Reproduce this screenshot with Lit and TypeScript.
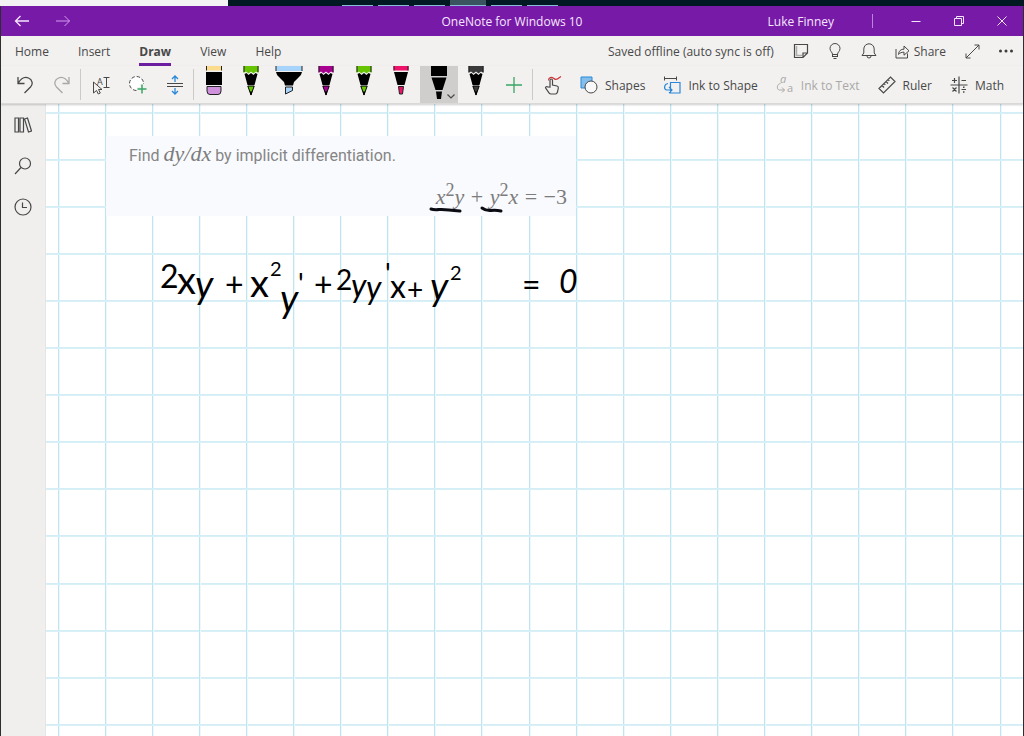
import { LitElement, html, svg, css } from "lit";
import { customElement, state } from "lit/decorators.js";

const icon = (w: number, h: number, body: unknown) =>
  html`<svg class="icon" width=${w} height=${h} viewBox="0 0 ${w} ${h}" aria-hidden="true">${body}</svg>`;

const icons = {
  back: icon(16, 12, svg`<path d="M15 6H1.500M6.500 1L1.500 6l5 5" stroke-width="1.300"/>`),
  forward: icon(16, 12, svg`<path d="M1 6h13.500M9.500 1l5 5-5 5"/>`),
  minimize: icon(10, 10, svg`<path d="M.5 5.500h9"/>`),
  restore: icon(10, 10, svg`<path d="M.5 2.500h7v7h-7zM2.500 2.500v-2h7v7h-2"/>`),
  close: icon(10, 10, svg`<path d="M.5.5l9 9M9.500.5l-9 9"/>`),
  note: icon(16, 16, svg`<path d="M1.500 1.500h13v8.500l-4.500 4.500H1.500zM14.500 10H10v4.500" stroke-width="1.200"/><path d="M3.500 3v9.500H9" opacity=".4" stroke-width="1.500"/>`),
  bulb: icon(14, 18, svg`<path d="M4.500 12.500c0-2.500-2.500-3-2.500-6a5 5 0 0 1 10 0c0 3-2.500 3.500-2.500 6zM4.500 14.500h5M5.500 16.500h3M4.500 12v3M9.500 12v3"/>`),
  bell: icon(16, 18, svg`<path d="M1 13.500h14l-1.800-2.500V7a5.200 5.200 0 0 0-10.400 0v4zM6 14a2 2 0 0 0 4 0"/>`),
  share: icon(15, 15, svg`<path d="M1 5v9h11.500V9.500M3.500 10.500c.3-3.800 2.500-5.300 5.500-5.300V2l5 4.800-5 4.400V8.200c-2.500 0-4 .6-5.500 2.300z"/>`),
  expand: icon(15, 15, svg`<path d="M1 14L14 1M9.500 1H14v4.500M1 9.500V14h4.500"/>`),
  more: icon(16, 4, svg`<g fill="#3b3b3b" stroke="none"><circle cx="2.500" cy="2" r="1.500"/><circle cx="8" cy="2" r="1.500"/><circle cx="13.500" cy="2" r="1.500"/></g>`),
  undo: icon(18, 19, svg`<path d="M2 2v6.500h6.500M2.200 8.200C5 3.500 9 1.500 12.500 3c4 1.800 4.800 6 2 9l-6 6" stroke-width="1.300"/>`),
  redo: icon(18, 19, svg`<path d="M16 2v6.500H9.500M15.800 8.200C13 3.500 9 1.500 5.500 3c-4 1.800-4.800 6-2 9l6 6" stroke-width="1.300"/>`),
  selectText: icon(20, 20, svg`<path d="M2.500 7v11l3-2.500 1.800 3.500 2-1-1.800-3.500h3.500z"/><path d="M12.500 2.500h6M12.500 12.500h6M15.500 2.500v10"/><text class="tiny" x="6" y="10">A</text>`),
  lasso: icon(20, 20, svg`<circle cx="8.500" cy="8.500" r="7" stroke-dasharray="3.500 2" fill="#fff"/><path d="M14 9v10M9 14h10" stroke="#f3f2f1" stroke-width="4"/><path d="M14 9.500v9M9.500 14h9" stroke="#3aa564" stroke-width="1.500"/>`),
  space: icon(18, 20, svg`<path d="M1 8.500h16M1 11.500h16"/><path d="M9 7V1.500M6 4l3-3 3 3M9 13v5.500M6 16l3 3 3-3" stroke="#2b88d8" stroke-width="1.300"/>`),
  plus: icon(18, 18, svg`<path d="M9 1v16M1 9h16" stroke="#3aa564" stroke-width="1.300"/>`),
  touch: icon(18, 20, svg`<path d="M6 12V5.500c0-2 2.500-2 2.500 0V10l4.500 1c1.200.3 1.500 1 1.300 2l-.8 4c-.3 1-.8 2-2 2H7c-1 0-1.500-.5-2-1.200l-3.500-5c0-1 1-1.500 2-1z" stroke-width="1.200"/><path d="M4.500 5.500c0-3 3-4 5-2.200s3.500 1.500 6-.8L17 1.500" stroke="#d13438" stroke-width="1.200"/>`),
  shapes: icon(18, 18, svg`<path d="M1 1h11v11H1z" fill="#83beec" stroke="#2b88d8"/><circle cx="11" cy="11" r="6" fill="#f8f8f8"/>`),
  inkShape: icon(18, 18, svg`<path d="M1.500 2.500h12M1.500.5v4M13.500.5v4"/><path d="M7.500 6.500h9.500v10.500H7.500zM5 7.500C1 8 .5 13 3.500 14h5M6 11l3 3-3 3" stroke="#2b88d8" stroke-width="1.200"/>`),
  inkText: icon(18, 28, svg`<text class="glyph slant" x="4" y="12">a</text><text class="glyph" x="11" y="21">a</text><path d="M4.500 12.500C.5 13 .5 19 3.500 19h5M6 16.500L8.500 19 6 21.500"/>`),
  ruler: icon(18, 18, svg`<path d="M1 12.500L12.500 1 17 5.500 5.500 17zM4 9.500l2 2M6 7.500l1.300 1.300M8 5.500l2 2M10 3.500l1.300 1.300" stroke-width="1.200"/>`),
  math: icon(18, 18, svg`<path d="M9 .5v17M.5 9h17M2 4.500h5M4.500 2v5M11.500 4.500H16M2.500 11.500l4 4M6.500 11.500l-4 4M11.500 13.500H16" stroke-width="1.200"/><path d="M13 11.200h1.500M13 16h1.500" stroke-width="1.500"/>`),
  books: icon(18, 16, svg`<path d="M1 1h3.500v14H1zM6 1h3.500v14H6zM10.500 2l3-1 4 13-3 1z" stroke-width="1.200"/>`),
  search: icon(18, 18, svg`<circle cx="11" cy="6.500" r="5.500" stroke-width="1.200"/><path d="M7 10.500L1 17" stroke-width="1.200"/>`),
  clock: icon(18, 18, svg`<circle cx="9" cy="9" r="8" stroke-width="1.200"/><path d="M8.500 4.500V9.500H13" stroke-width="1.200"/>`),
  chevron: icon(8, 5, svg`<path d="M.5.5L4 4 7.500.5" stroke-width="1.200"/>`),
};

const pen = (body: unknown) =>
  html`<svg class="pen-art" width="30" height="34" viewBox="0 0 30 34" aria-hidden="true">${body}</svg>`;

const pencil = (color: string) => pen(svg`
  <path d="M7.500 0h15v7l-2.500-1.500-2.500 2-2.500-2-2.500 2L10 5.500 7.500 7z" fill=${color}/>
  <path d="M8 0v6M22 0v6" stroke="#222" stroke-width="1"/>
  <path d="M8.500 8l2-1 2 2 2.500-2 2.500 2 2-2 2 1L18.500 19h-7z" fill="#000"/>
  <path d="M11.800 20h6.400L15 29z" fill=${color} stroke="#000" stroke-width="1"/>
  <path d="M13.700 25.500h2.600L15 29.500z" fill="#000"/>`);

const eraser = pen(svg`
  <path d="M7.500 0h15v4.500h-15z" fill="#fbdc8c"/><path d="M7.500 0v4.500M22.500 0v4.500" stroke="#222"/>
  <path d="M7 6h16v13H7z" fill="#000"/>
  <path d="M8 20.500h14V25q0 3.500-3 3.500h-8q-3 0-3-3.500z" fill="#cf91dc" stroke="#222"/>`);

const highlighter = pen(svg`
  <path d="M2 0h26v5H2z" fill="#a6d4fb"/><path d="M2 0v5M28 0v5" stroke="#222"/>
  <path d="M2 6h26q-.5 3-3 5l-5 5-1 3.500h-8L10 16l-5-5Q2.500 9 2 6z" fill="#000"/>
  <path d="M11.500 21h7v3.500l-7 3.500z" fill="#a6d4fb" stroke="#222"/>`);

const marker = pen(svg`
  <path d="M7.500 0h15v4.500h-15z" fill="#f0116b"/><path d="M8 0v4.500M22 0v4.500" stroke="#222"/>
  <path d="M8 6h14L18.500 19h-7z" fill="#000"/>
  <path d="M12.500 20.500h5L16.500 28h-3z" fill="#f0116b" stroke="#222"/>`);

const blackPen = pen(svg`
  <path d="M7 0h16v10H7zM7.500 11.500h15L18.500 24h-7zM12 25.500h6L17 33h-4z" fill="#000"/>`);

const tools = [
  { name: "Eraser", art: eraser },
  { name: "Green pencil", art: pencil("#66c400") },
  { name: "Light blue highlighter", art: highlighter },
  { name: "Purple pencil", art: pencil("#a8008f") },
  { name: "Lime pencil", art: pencil("#66c400") },
  { name: "Pink pen", art: marker },
  { name: "Black pen", art: blackPen },
  { name: "Black pencil", art: pencil("#3a3a3a") },
];

const TILE = 471;
const steps = Array.from({ length: 10 }, (_, i) => Math.floor(i * 47.1));

@customElement("app-root")
export class AppRoot extends LitElement {
  @state() private tool = 6;
  @state() private tab = "Draw";

  static styles = css`
    :host {
      display: flex;
      flex-direction: column;
      min-height: 100vh;
      box-sizing: border-box;
      font: 12px/16px "Open Sans", "Noto Sans", sans-serif;
      color: #484848;
      background: #f2f1f0;
    }
    button {
      font: inherit;
      color: inherit;
      background: none;
      border: 0;
      padding: 0;
      margin: 0;
      display: flex;
      align-items: center;
      justify-content: center;
    }
    .icon {
      display: block;
      flex: none;
      fill: none;
      stroke: currentColor;
    }
    .tiny, .glyph {
      fill: currentColor;
      stroke: none;
      font-size: 9px;
    }
    .glyph { font-size: 11px; }
    .slant { font-style: italic; }

    .desktop {
      height: 6px;
      display: flex;
      background: #011922;
    }
    .behind { width: 228px; background: #f3f3f3; }
    .tasks {
      display: flex;
      gap: 5px;
      margin-left: 114px;
    }
    .task {
      width: 31px;
      box-sizing: border-box;
      border-bottom: 1px solid #86bdd9;
    }
    .task.current { width: 36px; background: #3b5560; }

    .window {
      flex: 1;
      display: flex;
      flex-direction: column;
      border: solid #2e2e2e;
      border-width: 0 1px;
    }
    .titlebar {
      height: 30px;
      display: grid;
      grid-template-columns: 1fr auto 1fr;
      align-items: stretch;
      background: #761aa7;
      color: #f6e6fd;
    }
    .history, .system { display: flex; }
    .history button { width: 41px; }
    .forward { color: #d49cee; }
    .title { align-self: center; padding-top: 2px; }
    .system { justify-content: flex-end; align-items: center; }
    .system button { width: 43px; height: 30px; }
    .user { padding: 2px 38px 0 0; }
    .divider {
      width: 1px;
      height: 14px;
      margin-right: 21px;
      background: #bd83dc;
    }

    .tabs {
      height: 30px;
      display: flex;
      justify-content: space-between;
    }
    .tablist { display: flex; gap: 29px; padding-left: 14px; }
    .tab {
      border-bottom: 3px solid transparent;
      padding-top: 4px;
    }
    .tab.active {
      font-weight: 700;
      border-color: #6b1fa0;
    }
    .status { display: flex; align-items: center; }
    .saved { padding: 2px 10px 0 0; }
    .status button { width: 34px; height: 30px; }
    .status .share { width: auto; padding: 0 9px; gap: 4px; }
    .share span, .labelled span { padding-top: 2px; }

    .ribbon {
      height: 37px;
      display: flex;
      align-items: stretch;
      padding-left: 5px;
      border-bottom: 1px solid #dad9d8;
      box-shadow: 0 1px 2px #0003;
      z-index: 1;
    }
    .ribbon > button { width: 37px; }
    .rule {
      width: 1px;
      margin: 3px 1px 3px 0;
      background: #cbcac9;
    }
    .disabled { color: #a9a8a7; }
    .pens {
      width: 300px;
      display: grid;
      grid-template-columns: repeat(8, 1fr);
    }
    .pen {
      position: relative;
      align-items: flex-start;
      overflow: hidden;
    }
    .pen.active { background: #cfcecd; }
    .pen-art { display: block; fill: none; }
    .pen .icon { position: absolute; right: 3px; bottom: 4px; }
    .ribbon .labelled {
      width: auto;
      padding: 0 9px;
      gap: 7px;
      white-space: nowrap;
    }

    .body { flex: 1; display: flex; }
    .rail {
      width: 44px;
      display: flex;
      flex-direction: column;
      border-right: 1px solid #e6e5e4;
      background: #f0efee;
    }
    .rail button { height: 41px; }
    .canvas {
      flex: 1;
      position: relative;
      overflow: hidden;
      background: #fff;
    }
    .grid {
      position: absolute;
      inset: 0;
      width: 100%;
      height: 100%;
    }
    .problem {
      position: absolute;
      left: 60px;
      top: 32px;
      width: 470px;
      height: 80px;
      box-sizing: border-box;
      padding: 6px 9px 0 23px;
      background: #f9fafe;
      color: #858585;
      font: 16px/24px Roboto, sans-serif;
    }
    .problem p { margin: 0; }
    .problem .equation { text-align: right; padding-top: 17px; }
    .math {
      font-family: "Liberation Serif", serif;
      font-size: 22px;
      line-height: 24px;
      color: #7c7c7c;
    }
    .op { padding: 0 1px; }
    .problem sup { font-size: 18px; line-height: 0; }
    .ink {
      position: absolute;
      left: 0;
      top: 0;
      width: 600px;
      height: 240px;
      fill: #000;
      font: 32px Lato, sans-serif;
    }
    .ink .large { font-size: 38px; }
    .ink .mid { font-size: 28px; }
    .ink .small { font-size: 20px; }
    .ink .lean { font-style: italic; }
    .stroke {
      fill: none;
      stroke: #0b0b14;
      stroke-width: 3;
      stroke-linecap: round;
    }
  `;

  render() {
    return html`
      <div class="desktop">
        <div class="behind"></div>
        <div class="tasks">
          <span class="task"></span><span class="task"></span><span class="task"></span>
          <span class="task current"></span><span class="task"></span><span class="task"></span>
        </div>
      </div>
      <div class="window">
        <header class="titlebar">
          <div class="history">
            <button aria-label="Back">${icons.back}</button>
            <button class="forward" aria-label="Forward">${icons.forward}</button>
          </div>
          <div class="title">OneNote for Windows 10</div>
          <div class="system">
            <span class="user">Luke Finney</span>
            <span class="divider"></span>
            <button aria-label="Minimize">${icons.minimize}</button>
            <button aria-label="Restore">${icons.restore}</button>
            <button aria-label="Close">${icons.close}</button>
          </div>
        </header>
        <div class="tabs">
          <nav class="tablist">
            ${["Home", "Insert", "Draw", "View", "Help"].map((name) => html`
              <button class="tab ${name === this.tab ? "active" : ""}" @click=${() => (this.tab = name)}>${name}</button>`)}
          </nav>
          <div class="status">
            <span class="saved">Saved offline (auto sync is off)</span>
            <button aria-label="Feed">${icons.note}</button>
            <button aria-label="Tell me">${icons.bulb}</button>
            <button aria-label="Notifications">${icons.bell}</button>
            <button class="share">${icons.share}<span>Share</span></button>
            <button aria-label="Full screen">${icons.expand}</button>
            <button aria-label="More">${icons.more}</button>
          </div>
        </div>
        <div class="ribbon">
          <button aria-label="Undo">${icons.undo}</button>
          <button class="disabled" aria-label="Redo">${icons.redo}</button>
          <span class="rule"></span>
          <button aria-label="Select objects or text">${icons.selectText}</button>
          <button aria-label="Lasso select">${icons.lasso}</button>
          <button aria-label="Insert space">${icons.space}</button>
          <span class="rule"></span>
          <div class="pens">
            ${tools.map((t, i) => html`
              <button class="pen ${i === this.tool ? "active" : ""}" aria-label=${t.name} @click=${() => (this.tool = i)}>
                ${t.art}${i === this.tool ? icons.chevron : ""}
              </button>`)}
          </div>
          <button aria-label="Add pen">${icons.plus}</button>
          <span class="rule"></span>
          <button aria-label="Draw with touch">${icons.touch}</button>
          <button class="labelled">${icons.shapes}<span>Shapes</span></button>
          <button class="labelled">${icons.inkShape}<span>Ink to Shape</span></button>
          <button class="labelled disabled">${icons.inkText}<span>Ink to Text</span></button>
          <button class="labelled">${icons.ruler}<span>Ruler</span></button>
          <button class="labelled">${icons.math}<span>Math</span></button>
        </div>
        <div class="body">
          <nav class="rail">
            <button aria-label="Notebooks">${icons.books}</button>
            <button aria-label="Search">${icons.search}</button>
            <button aria-label="Recent notes">${icons.clock}</button>
          </nav>
          <main class="canvas">
            <svg class="grid" aria-hidden="true">
              <defs>
                <pattern id="squares" x="12" y="8" width=${TILE} height=${TILE} patternUnits="userSpaceOnUse">
                  ${steps.map((p) => svg`
                    <rect x=${p} y="0" width="1" height=${TILE} fill="#bfe5f3"/>
                    <rect x=${p + 1} y="0" width="1" height=${TILE} fill="#edf8fb"/>
                    <rect x="0" y=${p} width=${TILE} height="1" fill="#d3eef6"/>
                    <rect x="0" y=${p + 1} width=${TILE} height="1" fill="#d9f0f7"/>`)}
                </pattern>
              </defs>
              <rect width="100%" height="100%" fill="url(#squares)"/>
            </svg>
            <section class="problem">
              <p>Find <i class="math">dy/dx</i> by implicit differentiation.</p>
              <p class="equation math"><i>x</i><sup>2</sup><i>y</i><span class="op"> + </span><i>y</i><sup>2</sup><i>x</i><span class="op"> = </span>−3</p>
            </section>
            <svg class="ink" viewBox="0 0 600 240">
              <path class="stroke" d="M385 105q3 1 8 .5t21 1.500M436 104q4 3 9 2.500t10 .5"/>
              <text>
                <tspan x="114" y="184">2</tspan><tspan class="large" x="131" y="190">x</tspan><tspan class="large lean" x="149" y="194">y</tspan>
                <tspan x="179" y="192">+</tspan>
                <tspan class="large" x="204" y="193">x</tspan><tspan class="small" x="224" y="172">2</tspan><tspan class="large lean" x="234" y="208">y</tspan><tspan class="mid" x="252" y="190">'</tspan>
                <tspan x="268" y="192">+</tspan>
                <tspan class="mid" x="290" y="186">2</tspan><tspan class="lean" x="305" y="193">y</tspan><tspan class="lean" x="320" y="195">y</tspan><tspan class="mid" x="339" y="180">'</tspan><tspan x="344" y="194">x</tspan>
                <tspan class="mid" x="361" y="196">+</tspan>
                <tspan class="large lean" x="384" y="196">y</tspan><tspan class="small" x="404" y="176">2</tspan>
                <tspan x="476" y="192">=</tspan>
                <tspan class="lean" x="513" y="189">0</tspan>
              </text>
            </svg>
          </main>
        </div>
      </div>
    `;
  }
}
